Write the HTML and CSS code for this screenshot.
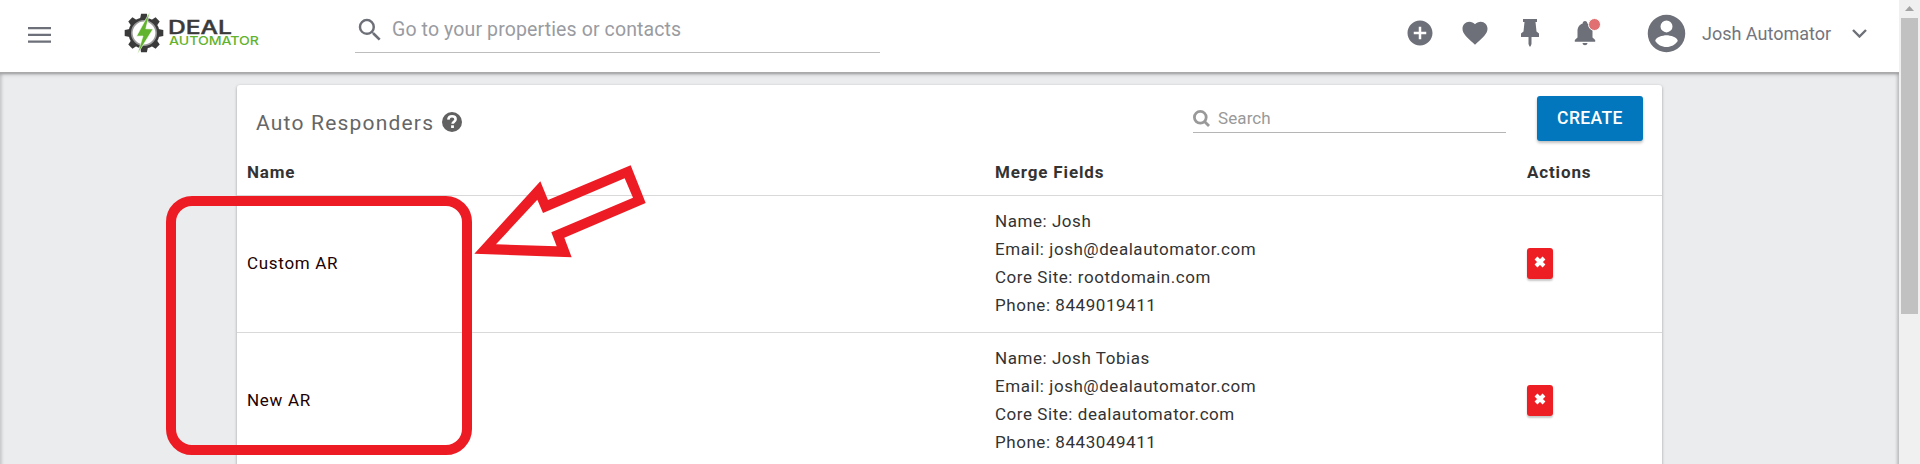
FILE: index.html
```html
<!DOCTYPE html>
<html lang="en">
<head>
    <meta charset="UTF-8">
    <meta name="viewport" content="width=device-width, initial-scale=1.0">
    <title>Auto Responders - Deal Automator</title>
    <link rel="stylesheet" href="styles.css">
</head>
<body>
    <div class="page">
        <header class="topbar">
            <button class="menu-btn" aria-label="Menu">
                <svg width="23" height="16" viewBox="0 0 23 16"><path d="M0 0h23v2.3H0zM0 6.8h23v2.3H0zM0 13.5h23v2.3H0z"/></svg>
            </button>
            <a class="logo" href="#">
                <svg width="140" height="48" viewBox="0 0 140 48">
                    <g transform="translate(22 23)">
                        <g fill="#3a3a3a">
                            <circle r="15.5"/>
                            <path id="tooth" d="M-4.2 -13L-2.9 -19.3H2.9L4.2 -13z"/>
                            <use href="#tooth" transform="rotate(45)"/>
                            <use href="#tooth" transform="rotate(90)"/>
                            <use href="#tooth" transform="rotate(135)"/>
                            <use href="#tooth" transform="rotate(180)"/>
                            <use href="#tooth" transform="rotate(225)"/>
                            <use href="#tooth" transform="rotate(270)"/>
                            <use href="#tooth" transform="rotate(315)"/>
                        </g>
                        <circle r="12.2" fill="#fff" stroke="#999" stroke-width="1.6"/>
                        <path d="M6 -21.5L-7.5 3.2L-1 3L-6.5 21L9 -4L1.8 -4.2z" fill="#62b32e" stroke="#fff" stroke-width="0.6"/>
                    </g>
                    <text class="logo-deal" x="46" y="23.5" textLength="64" lengthAdjust="spacingAndGlyphs">DEAL</text>
                    <text class="logo-automator" x="47" y="35" textLength="90" lengthAdjust="spacingAndGlyphs">AUTOMATOR</text>
                </svg>
            </a>
            <div class="global-search">
                <svg width="30" height="30" viewBox="0 0 24 24"><path d="M15.5 14h-.79l-.28-.27A6.471 6.471 0 0 0 16 9.5 6.5 6.5 0 1 0 9.5 16c1.61 0 3.09-.59 4.23-1.57l.27.28v.79l5 4.99L20.49 19l-4.99-5zm-6 0C7.01 14 5 11.99 5 9.5S7.01 5 9.5 5 14 7.01 14 9.5 11.99 14 9.5 14z"/></svg>
                <span>Go to your properties or contacts</span>
            </div>
            <nav class="quick-links">
                <svg width="30" height="30" viewBox="0 0 24 24"><path d="M12 2C6.48 2 2 6.48 2 12s4.48 10 10 10 10-4.480 10-10S17.52 2 12 2zm5 11h-4v4h-2v-4H7v-2h4V7h2v4h4v2z"/></svg>
                <svg width="30" height="30" viewBox="0 0 24 24"><path d="M12 21.350l-1.450-1.320C5.400 15.360 2 12.280 2 8.500 2 5.420 4.420 3 7.500 3c1.740 0 3.410.810 4.500 2.090C13.090 3.810 14.760 3 16.500 3 19.580 3 22 5.420 22 8.500c0 3.780-3.400 6.860-8.550 11.540L12 21.350z"/></svg>
                <svg width="30" height="30" viewBox="0 0 30 30"><path d="M8 1h14v3h-1.500l1 9.500 2.500 2V19h-7.500v7l-1 2.500h-1l-1-2.500v-7H6v-3.500l2.500-2 1-9.500H8z"/></svg>
                <span class="bell">
                    <svg width="30" height="30" viewBox="0 0 30 30"><path d="M15 3c-1.500 0-2.300 1-2.300 2.400C9 6.500 7.500 9.700 7.500 13v6.500L4.800 22v1.800h20.400V22l-2.700-2.500V13c0-3.300-1.500-6.500-5.200-7.600C17.300 4 16.500 3 15 3zM12.500 25c.2 1.500 1.200 2.200 2.500 2.200s2.300-.7 2.500-2.200z"/></svg>
                    <i class="badge"></i>
                </span>
            </nav>
            <div class="user">
                <svg width="45" height="45" viewBox="0 0 24 24"><path fill-rule="evenodd" d="M12 2a10 10 0 1 0 0 20 10 10 0 0 0 0-20zm0 3a3.200 3.200 0 1 1 0 6.400A3.200 3.200 0 0 1 12 5zm0 14.200c-2.500 0-4.710-1.280-6-3.220.030-1.990 4-3.080 6-3.080s5.970 1.090 6 3.080c-1.290 1.940-3.500 3.220-6 3.220z"/></svg>
                <span class="user-name">Josh Automator</span>
                <svg class="chevron" width="15" height="9" viewBox="0 0 15 9"><path d="M1 1l6.500 6.500L14 1"/></svg>
            </div>
        </header>

        <main class="content">
            <section class="card">
                <div class="card-header">
                    <h1>Auto Responders</h1>
                    <svg class="help" width="20" height="20" viewBox="0 0 20 20">
                        <circle cx="10" cy="10" r="10"/>
                        <path d="M6.300 7.600C6.600 5.200 8 4.300 10 4.300c2.200 0 3.600 1.200 3.600 2.900 0 2.400-3 2.500-3 4.600" fill="none" stroke="#fff" stroke-width="2.600"/>
                        <path d="M9.100 13.300h2.800V16H9.100z" fill="#fff"/>
                    </svg>
                    <div class="table-search">
                        <svg width="18" height="18" viewBox="0 0 18 18"><circle cx="7.300" cy="7.300" r="5.900"/><path d="M11.500 11.500L16 16"/></svg>
                        <span>Search</span>
                    </div>
                    <button class="create-btn">CREATE</button>
                </div>
                <table>
                    <thead>
                        <tr>
                            <th class="col-name">Name</th>
                            <th class="col-fields">Merge Fields</th>
                            <th>Actions</th>
                        </tr>
                    </thead>
                    <tbody>
                        <tr>
                            <td class="name">Custom AR</td>
                            <td>Name: Josh<br>Email: josh@dealautomator.com<br>Core Site: rootdomain.com<br>Phone: 8449019411</td>
                            <td><button class="delete-btn" aria-label="Delete"><svg width="12" height="12" viewBox="0 0 12 12"><path d="M2 2l8 8M10 2l-8 8"/></svg></button></td>
                        </tr>
                        <tr>
                            <td class="name">New AR</td>
                            <td>Name: Josh Tobias<br>Email: josh@dealautomator.com<br>Core Site: dealautomator.com<br>Phone: 8443049411</td>
                            <td><button class="delete-btn" aria-label="Delete"><svg width="12" height="12" viewBox="0 0 12 12"><path d="M2 2l8 8M10 2l-8 8"/></svg></button></td>
                        </tr>
                    </tbody>
                </table>
            </section>
        </main>
    </div>

    <div class="scrollbar">
        <svg width="9" height="5" viewBox="0 0 9 5"><path d="M0 5L4.500 0 9 5z"/></svg>
        <div class="thumb"></div>
    </div>

    <!-- callout over the name column -->
    <div class="highlight"></div>
    <svg class="arrow" width="200" height="120" viewBox="0 0 600 360">
        <path fill-rule="evenodd" d="M43 311L241 94L264 150L512 46L557 159L313 263L335 322zM108 283L290 289L274 247L519 143L494 85L249 189L232 149z"/>
    </svg>
</body>
</html>
```

FILE: styles.css
```css
:root {
    --icon: #6e7079; --line: #d9d9d9; --text: #333; --muted: #999;
    --primary: #0277bd; --danger: #ed1f24; --callout: #ed1c24;
}
* { box-sizing: border-box; }
body {
    margin: 0; height: 464px; overflow: hidden; display: flex; position: relative;
    font-family: Roboto, "Liberation Sans", sans-serif; font-size: 17px; color: var(--text); background: #ebecee;
}
button { border: none; padding: 0; font-family: inherit; cursor: pointer; }
svg { display: block; flex: none; }
.page { width: 1899px; height: 464px; display: flex; flex-direction: column; overflow: hidden; }

.topbar {
    flex: none; height: 73px; background: #fff; border-bottom: 1px solid #aaa; box-shadow: 0 1px 4px rgba(0, 0, 0, 0.25);
    display: flex; align-items: flex-start; padding-left: 28px; fill: var(--icon); z-index: 1;
}
.menu-btn { background: none; margin-top: 27px; fill: var(--icon); }
.logo { margin: 10px 0 0 71px; }
.logo-deal { font: 500 18px Inter, sans-serif; fill: #3a3a3a; stroke: #3a3a3a; stroke-width: 0.4px; }
.logo-automator { font: 500 12px Inter, sans-serif; fill: #62b32e; }
.global-search {
    flex: none; width: 525px; height: 53px; margin-left: 93px; border-bottom: 1px solid #bdbdbd;
    display: flex; color: #999ba1; font-size: 19.5px; line-height: 24px; letter-spacing: 0.12px;
}
.global-search svg { margin: 15px 7px 0 0; }
.global-search span { padding-top: 18px; white-space: nowrap; }
.quick-links { display: flex; gap: 25px; margin: 18px 0 0 525px; }
.bell { position: relative; }
.badge { position: absolute; top: 0; right: -1px; width: 13px; height: 13px; border-radius: 50%; background: #e07072; border: 1px solid #fff; }
.user { display: flex; align-items: center; height: 66px; margin-left: 44px; }
.user-name { margin-left: 13px; width: 150px; color: #73757d; font-size: 18px; white-space: nowrap; }
.chevron path { fill: none; stroke: var(--icon); stroke-width: 2.4; }

.content { flex: 1; padding: 12px 237px 0; box-shadow: inset 2px 0 3px rgba(0, 0, 0, 0.15), inset -2px 0 3px rgba(0, 0, 0, 0.2); }
.card { background: #fff; border-radius: 3px; box-shadow: 0 1px 3px rgba(0, 0, 0, 0.35); }
.card-header { height: 61px; display: flex; padding-left: 19px; }
.card-header h1 { width: 185px; margin: 25px 0 0; font-size: 21px; line-height: 26px; font-weight: 400; letter-spacing: 1.2px; color: #666; white-space: nowrap; }
.help { margin: 27px 0 0 1px; fill: #616161; }
.table-search { width: 313px; height: 48px; margin-left: 731px; border-bottom: 1px solid #b5b5b5; display: flex; color: var(--muted); line-height: 20px; letter-spacing: 0.1px; }
.table-search svg { margin: 25px 7px 0 0; fill: none; stroke: var(--muted); stroke-width: 2.8; }
.table-search span { padding-top: 23px; }
.create-btn {
    width: 106px; height: 45px; margin: 11px 0 0 31px; padding-bottom: 1px; border-radius: 3px; background: var(--primary); color: #fff;
    font-size: 17.5px; font-weight: 500; letter-spacing: 0.4px; box-shadow: 0 2px 3px rgba(0, 0, 0, 0.25);
}

table { width: 100%; table-layout: fixed; border-collapse: separate; border-spacing: 0; letter-spacing: 0.55px; }
.col-name { width: 748px; }
.col-fields { width: 532px; }
th { height: 50px; padding: 3px 10px 0; text-align: left; font-weight: 700; letter-spacing: 0.85px; border-bottom: 1px solid var(--line); }
td { padding: 11px 10px 13px; line-height: 28px; border-bottom: 1px solid var(--line); }
.name { color: #200; letter-spacing: 0.7px; }
.delete-btn { display: flex; align-items: center; justify-content: center; width: 26px; height: 31px; border-radius: 3px; background: var(--danger); box-shadow: 0 2px 2px rgba(0, 0, 0, 0.22); }
.delete-btn svg { margin: -2px 1px 0 0; stroke: #fff; stroke-width: 4; }

.scrollbar { width: 21px; height: 464px; background: #f0f0f0; display: flex; flex-direction: column; align-items: center; padding-top: 6px; fill: #a3a3a3; }
.thumb { width: 17px; height: 296px; margin-top: 7px; background: #c1c1c1; }

.highlight { position: absolute; left: 166px; top: 196px; width: 306px; height: 259px; border: 10px solid var(--callout); border-radius: 26px; z-index: 2; }
.arrow { position: absolute; left: 460px; top: 150px; fill: var(--callout); z-index: 2; }
```
